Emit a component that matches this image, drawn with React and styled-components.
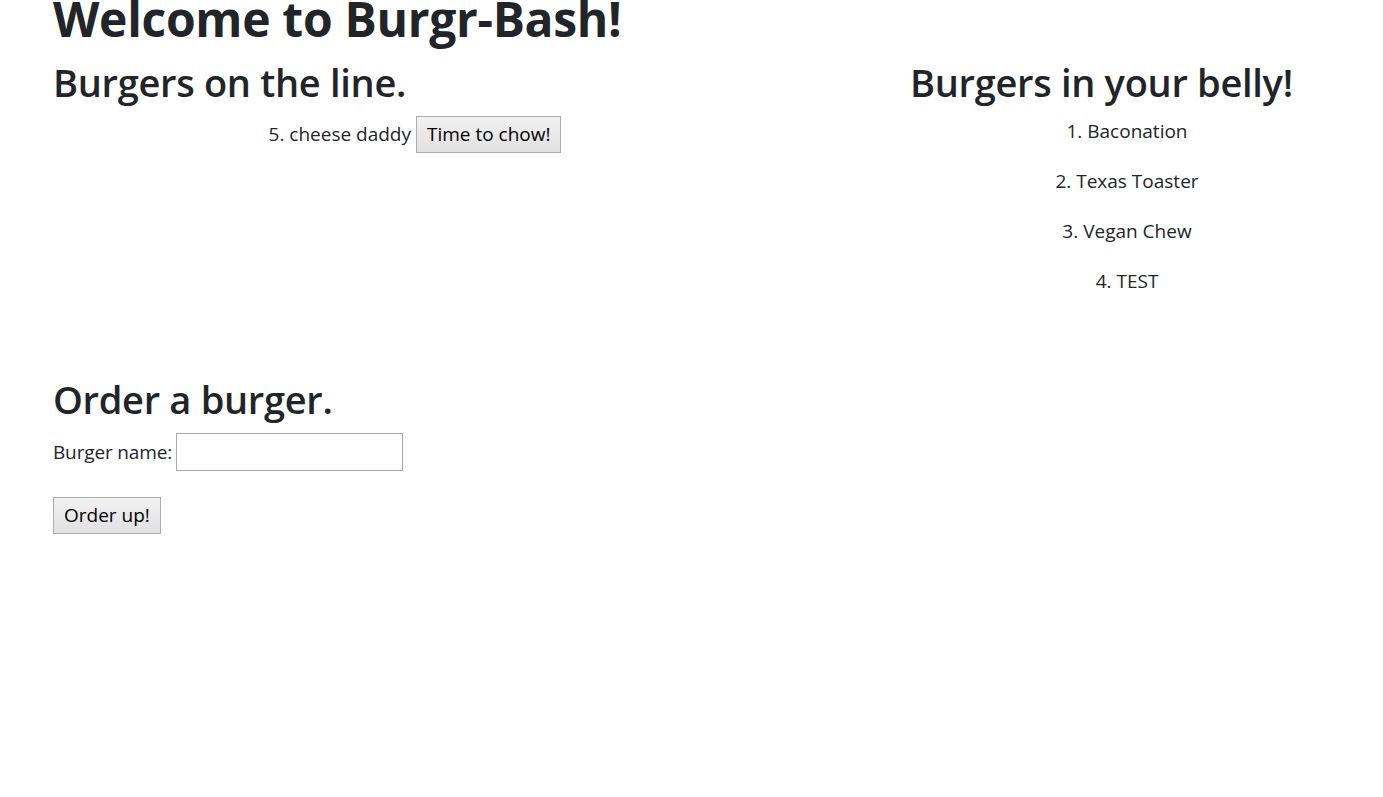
import React from 'react'
import styled, { createGlobalStyle } from 'styled-components'

const GlobalStyle = createGlobalStyle`
  html, body { margin: 0; padding: 0; background: #fff; }
  body {
    font-family: "Open Sans", "Noto Sans", sans-serif;
    font-size: 20px;
    line-height: 1.5;
    color: #212529;
  }
  * { box-sizing: border-box; }
`

const devoured = ['Baconation', 'Texas Toaster', 'Vegan Chew', 'TEST']

export default function App() {
  return (
    <Page>
      <GlobalStyle />
      <Title>Welcome to Burgr-Bash!</Title>
      <Columns>
        <Column>
          <SubTitle>Burgers on the line.</SubTitle>
          <BurgerList>
            <BurgerItem>
              5. cheese daddy <Button>Time to chow!</Button>
            </BurgerItem>
          </BurgerList>
        </Column>
        <Column>
          <SubTitle>Burgers in your belly!</SubTitle>
          <BurgerList>
            {devoured.map((name, i) => (
              <BurgerItem key={name}>{i + 1}. {name}</BurgerItem>
            ))}
          </BurgerList>
        </Column>
      </Columns>
      <OrderForm onSubmit={e => e.preventDefault()}>
        <SubTitle>Order a burger.</SubTitle>
        <Field>
          <Label htmlFor="burger-name">Burger name:</Label>
          <TextInput id="burger-name" type="text" />
        </Field>
        <Button type="submit">Order up!</Button>
      </OrderForm>
    </Page>
  )
}

const Page = styled.div`
  padding: 0 53px;
`

const Title = styled.h1`
  margin: -11px 0 9px;
  font-size: 48px;
  font-weight: 700;
  line-height: 60px;
  letter-spacing: -0.3px;
`

const SubTitle = styled.h2`
  margin: 0 0 10px;
  font-size: 38px;
  font-weight: 600;
  line-height: 48px;
  letter-spacing: -0.3px;
`

const Columns = styled.div`
  display: grid;
  grid-template-columns: 724px 434px;
  column-gap: 133px;
`

const Column = styled.section`
  display: flex;
  flex-direction: column;
`

const BurgerList = styled.div`
  text-align: center;
`

const BurgerItem = styled.p`
  margin: 0 0 20px;
  font-size: 19px;
  line-height: 30px;
`

const Button = styled.button`
  font-family: inherit;
  font-size: 19px;
  line-height: 27px;
  color: #000;
  padding: 4px 10px;
  border: 1px solid #adadad;
  border-radius: 0;
  background: linear-gradient(#f1f1f1, #e1e1e1);
  cursor: pointer;
`

const OrderForm = styled.form`
  margin-top: 59px;
`

const Field = styled.div`
  display: flex;
  align-items: center;
  gap: 4px;
  margin-bottom: 26px;
  font-size: 19px;
`

const Label = styled.label`
  letter-spacing: -0.15px;
`

const TextInput = styled.input`
  width: 227px;
  height: 38px;
  border: 1px solid #a9a9a9;
  font-family: inherit;
  font-size: 19px;
  padding: 2px 4px;
`
